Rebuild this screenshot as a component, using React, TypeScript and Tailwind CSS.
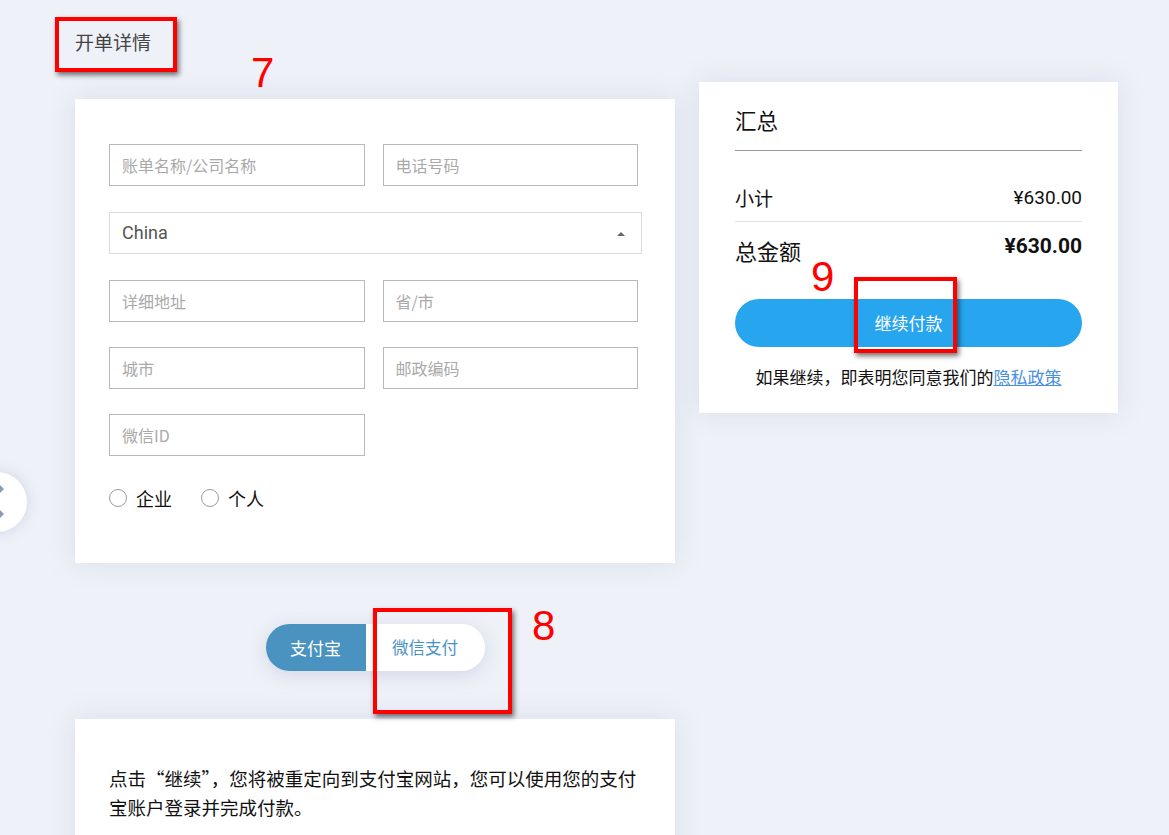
import React from "react";

const cjk = "font-['Noto_Sans_CJK_SC',sans-serif]";
const roboto = "font-['Roboto','Noto_Sans_CJK_SC',sans-serif]";

function Field({ ph }: { ph: string }) {
  return (
    <div className="h-[42px] border border-[#b8b8b8] bg-white flex items-center pl-[12px]">
      <span className="text-[16px] text-[#a9a9a9] leading-none">{ph}</span>
    </div>
  );
}

function Radio({ label }: { label: string }) {
  return (
    <label className="flex items-center gap-[9px]">
      <span className="w-[18px] h-[18px] rounded-full border border-[#9a9a9a] bg-white" />
      <span className="text-[18px] text-[#111] leading-none">{label}</span>
    </label>
  );
}

export default function App() {
  return (
    <div className={`relative min-h-[835px] w-full overflow-hidden bg-[#eef1f7] ${cjk}`}>
      <div className="flex items-start">
        {/* left column */}
        <div className="ml-[75px] w-[600px] flex flex-col">
          <div className="pt-[30px] text-[19px] leading-6 text-[#444]">开单详情</div>

          <div className="mt-[45px] bg-white shadow-[0_0_24px_rgba(170,180,210,0.3)] pt-[45px] pb-[56px] px-[34px]">
            <div className="w-[529px] grid grid-cols-2 gap-x-[18px]">
              <Field ph="账单名称/公司名称" />
              <Field ph="电话号码" />
            </div>
            <div className="mt-[26px] w-[533px] h-[42px] border border-[#dcdcdc] flex items-center justify-between pl-[12px] pr-[16px]">
              <span className={`${roboto} text-[18px] text-[#555] leading-none`}>China</span>
              <svg width="8" height="5" viewBox="0 0 8 5">
                <path d="M0 5 L4 1 L8 5 Z" fill="#666" />
              </svg>
            </div>
            <div className="mt-[26px] w-[529px] grid grid-cols-2 gap-x-[18px] gap-y-[25px]">
              <Field ph="详细地址" />
              <Field ph="省/市" />
              <Field ph="城市" />
              <Field ph="邮政编码" />
              <Field ph="微信ID" />
            </div>
            <div className="mt-[33px] flex items-center gap-[29px]">
              <Radio label="企业" />
              <Radio label="个人" />
            </div>
          </div>

          <div className="mt-[61px] flex justify-center">
            <div className="flex rounded-full shadow-[0_4px_18px_rgba(160,170,200,0.35)]">
              <div className="w-[100px] h-[47px] rounded-l-full bg-[#4a92bf] flex items-center justify-center text-[17px] text-white">
                支付宝
              </div>
              <div className="w-[119px] h-[47px] rounded-r-full bg-white flex items-center justify-center text-[16.5px] text-[#4a92c6]">
                微信支付
              </div>
            </div>
          </div>

          <div className="mt-[48px] bg-white shadow-[0_0_24px_rgba(170,180,210,0.3)] pt-[45px] pb-[40px] px-[34px]">
            <p className="text-[18.5px] leading-[29px] text-[#111]">
              点击“继续”，您将被重定向到支付宝网站，您可以使用您的支付宝账户登录并完成付款。
            </p>
          </div>
        </div>

        {/* right column */}
        <div className="ml-[24px] mt-[82px] w-[419px] bg-white shadow-[0_0_24px_rgba(170,180,210,0.3)] px-[36px] pt-[24px] pb-[24px]">
          <div className="text-[21.5px] leading-7 text-[#111] pb-[16px] border-b border-[#999]">汇总</div>
          <div className="mt-[33px] flex justify-between items-center pb-[9px] border-b border-[#e3e3e3]">
            <span className="text-[19px] leading-7 text-[#111]">小计</span>
            <span className={`${roboto} text-[19px] leading-7 text-[#111]`}>¥630.00</span>
          </div>
          <div className="pt-[10px] flex justify-between items-start">
            <span className="pt-[4px] text-[22px] leading-7 text-[#111]">总金额</span>
            <span className={`${roboto} text-[21px] leading-7 font-bold text-[#111]`}>¥630.00</span>
          </div>
          <div className="mt-[35px] h-[48px] rounded-full bg-[#27a5ef] flex items-center justify-center text-[17px] text-white">
            继续付款
          </div>
          <div className="mt-[18px] text-center text-[17px] leading-6 text-[#111]">
            如果继续，即表明您同意我们的<span className="text-[#4a90e2] underline">隐私政策</span>
          </div>
        </div>
      </div>

      {/* side toggle circle */}
      <div className="absolute left-[-33px] top-[472px] w-[60px] h-[60px] rounded-full bg-white shadow-[0_0_14px_rgba(170,180,210,0.45)]">
        <svg className="absolute left-[33px] top-[13px]" width="6" height="34" viewBox="0 0 6 34">
          <path d="M0 0 L4 4 L0 8 Z" fill="#8a9bb3" />
          <path d="M0 25 L4 29 L0 33 Z" fill="#8a9bb3" />
        </svg>
      </div>

      {/* annotations */}
      <div className="absolute left-[55px] top-[17px] w-[122px] h-[55px] border-[4px] border-[#ff0000] shadow-[2px_3px_5px_rgba(0,0,0,0.55)]" />
      <div className="absolute left-[251px] top-[52px] text-[42px] leading-none text-[#ff0000] font-['Liberation_Sans',sans-serif]">7</div>

      <div className="absolute left-[373px] top-[608px] w-[139px] h-[106px] border-[4px] border-[#ff0000] shadow-[2px_3px_5px_rgba(0,0,0,0.55)]" />
      <div className="absolute left-[532px] top-[605px] text-[42px] leading-none text-[#ff0000] font-['Liberation_Sans',sans-serif]">8</div>

      <div className="absolute left-[811px] top-[256px] text-[42px] leading-none text-[#ff0000] font-['Liberation_Sans',sans-serif]">9</div>
      <div className="absolute left-[854px] top-[277px] w-[103px] h-[76px] border-[4px] border-[#ff0000] shadow-[2px_3px_5px_rgba(0,0,0,0.55)]" />
    </div>
  );
}
